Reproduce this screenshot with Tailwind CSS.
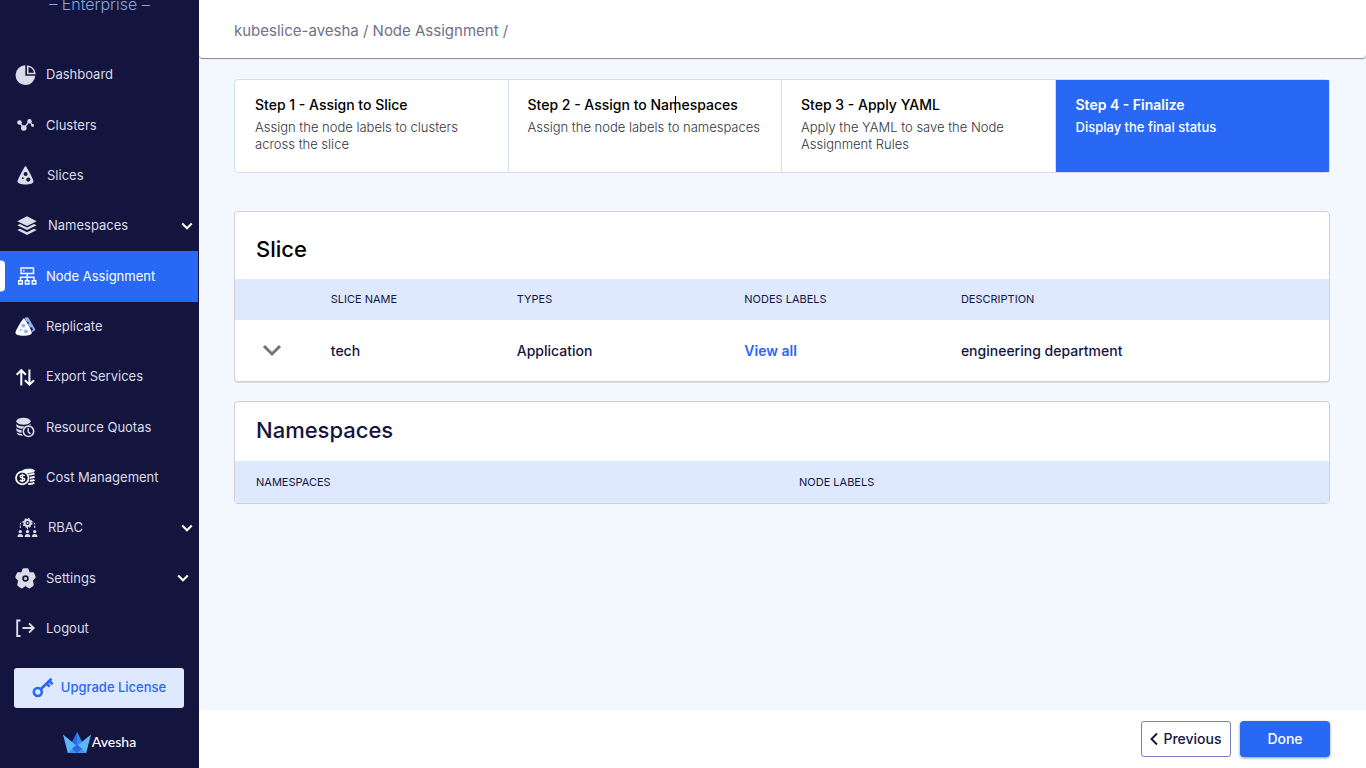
<!DOCTYPE html>
<html lang="en">
<head>
<meta charset="utf-8">
<title>Node Assignment</title>
<script src="https://cdn.jsdelivr.net/npm/@tailwindcss/browser@4"></script>
</head>
<body class="flex h-screen overflow-hidden bg-white font-['Inter','Liberation_Sans',sans-serif] text-[#14153f]">
<aside class="flex w-[199px] shrink-0 flex-col bg-[#13153f] text-[13px] text-[#dcdce8]">
  <div class="h-[50px] shrink-0"><p class="-mt-2 text-center text-base leading-6 font-light text-[#88a5dc]">– Enterprise –</p></div>
  <nav class="flex min-h-0 flex-1 flex-col">
    <a href="#" class="flex flex-1 items-center gap-[10px] pl-[15px]">
      <svg class="size-[21px]" viewBox="0 0 21 21" fill="currentColor"><path d="M10.300 0.300A9.900 9.900 0 1 0 20.300 10.700H10.300z"/><path d="M12.700 1.300a8 8 0 0 1 7.200 7.200h-7.200z" fill="none" stroke="currentColor" stroke-width="1.500"/></svg>
      Dashboard</a>
    <a href="#" class="flex flex-1 items-center gap-[10px] pl-[15px]">
      <svg class="size-[21px]" viewBox="0 0 21 21" fill="currentColor"><path d="M4.500 7.500 9 13l5.500-7 3 4.500" fill="none" stroke="currentColor" stroke-width="1.300"/><circle cx="4.500" cy="7.500" r="2.300"/><circle cx="8.800" cy="13" r="2.800"/><circle cx="14.500" cy="6.200" r="2.200"/><circle cx="17.600" cy="10.500" r="1.400"/></svg>
      Clusters</a>
    <a href="#" class="flex flex-1 items-center gap-[11px] pl-[15px]">
      <svg class="size-[21px]" viewBox="0 0 21 21" fill="currentColor"><path d="M10.500 1c.8 0 8 13.500 8 15.500 0 1.700-3.500 3-8 3s-8-1.300-8-3C2.500 14.500 9.700 1 10.500 1z"/><circle cx="10.600" cy="9" r="2" fill="#13153f"/><circle cx="7.800" cy="13.300" r="1" fill="#13153f"/><circle cx="13.300" cy="14.600" r="2.100" fill="#13153f"/></svg>
      Slices</a>
    <a href="#" class="flex flex-1 items-center gap-[11px] pr-[6px] pl-[17px]">
      <svg class="size-5" viewBox="0 0 20 20" fill="currentColor"><path d="M10 0.300 19.700 5.200 10 10.100 0.300 5.200z"/><path d="M0.300 9.200 3 7.900l7 3.500 7-3.500 2.700 1.300L10 14.100zM0.300 14l2.700-1.300 7 3.500 7-3.500 2.700 1.300L10 18.900z"/></svg>
      <span class="flex-1">Namespaces</span>
      <svg class="h-3 w-3" viewBox="0 0 12 12" fill="none" stroke="#fff" stroke-width="2"><path d="M1.200 3.500 6 8.300l4.800-4.800"/></svg></a>
    <a href="#" aria-current="page" class="relative mr-px flex flex-1 items-center gap-[9px] bg-[#2868f4] pl-[17px] text-white">
      <span class="absolute top-1/2 left-0 h-[31px] w-[5px] -translate-y-1/2 rounded-r bg-white"></span>
      <svg class="size-5" viewBox="0 0 20 20" fill="none" stroke="currentColor" stroke-width="1.400"><path d="M4 2h12.500v5.500H4zM6 4.800h1.500M10.200 7.500v7M3.500 14.500v-3.200H17v3.200M1.700 14.700h3.600v3.300H1.700zM8.400 14.700H12v3.300H8.400zM15.200 14.700h3.600v3.300h-3.600z"/></svg>
      Node Assignment</a>
    <a href="#" class="flex flex-1 items-center gap-[10px] pl-[15px]">
      <svg class="size-[21px]" viewBox="0 0 21 21"><path d="M9.500 2c1.800-1 3.300-.9 4.700.9l5.800 10.100c.5 1-.8 2.300-2.700 3z" fill="#8fb0f5"/><circle cx="15.800" cy="13.200" r="1.900" fill="#13153f"/><circle cx="12.500" cy="7" r="1.300" fill="#13153f"/><path d="M8.800 2.200c.9 0 8 12.300 8 14.500 0 1.800-3.300 3-8.200 3S.4 18.400.4 16.700C.4 14.500 7.900 2.200 8.800 2.200z" fill="#fff"/><circle cx="8.300" cy="9.700" r="1.900" fill="#8fb0f5"/><circle cx="5.600" cy="13.900" r="1" fill="#8fb0f5"/><circle cx="11" cy="15.300" r="1.900" fill="#8fb0f5"/></svg>
      Replicate</a>
    <a href="#" class="flex flex-1 items-center gap-[10px] pl-[15px]">
      <svg class="size-[21px]" viewBox="0 0 21 21" fill="none" stroke="#fff" stroke-width="2"><path d="M6.300 18.500V3.500M1.700 7.800 6.300 3.200l4.600 4.600M14.400 2.500v15M9.900 13.200l4.500 4.500 4.600-4.500"/></svg>
      Export Services</a>
    <a href="#" class="flex flex-1 items-center gap-[10px] pl-[15px]">
      <svg class="size-[21px]" viewBox="0 0 21 21" fill="currentColor"><ellipse cx="8.500" cy="4.200" rx="7.200" ry="3.500"/><path d="M1.300 6.900c2 2.200 5.500 2.700 8.500 2.200l-2.300 2.600c-3.200-.2-6.200-1.300-6.200-3zM1.300 11.300c1.500 1.300 3.500 1.800 5.300 1.800v2.600c-3-.2-5.300-1.200-5.300-2.700zM13 8.200c1.200-.4 2-.9 2.500-1.500v1.500zM1.800 15.500c1.400.9 3.200 1.300 5 1.400l1 1.900c-3.300 0-6-1.300-6-3.300z"/><circle cx="13.500" cy="14.300" r="5.200" fill="none" stroke="currentColor" stroke-width="1.600"/><path d="M13.200 11.300v3.700l2.300 1.900" fill="none" stroke="currentColor" stroke-width="1.500"/></svg>
      Resource Quotas</a>
    <a href="#" class="flex flex-1 items-center gap-[10px] pl-[15px]">
      <svg class="size-[21px]" viewBox="0 0 21 21" fill="none" stroke="#fff"><path d="M6.500 4.500C8.500 1.800 18.500 1.200 19.500 3.800c0 1.600-5 1.700-7.500 1.700z" fill="#fff"/><path d="M13.500 7.300c2 .2 4.500-.1 6-.9M14.800 10.600c2 .2 3.600-.2 4.800-.9M14.800 13.700c1.800.1 3.300-.2 4.700-.9M13.300 17c2.300.1 4.700-.2 6-1.200" stroke-width="2"/><circle cx="7.300" cy="11" r="6.300" stroke-width="1.700"/><path d="M9.700 8.800c-.8-1-4.600-1.200-4.600.7 0 2 4.700 1 4.700 3 0 1.900-4 1.700-4.900.5M7.400 6.800v8.400" stroke-width="1.300"/></svg>
      Cost Management</a>
    <a href="#" class="flex flex-1 items-center gap-[10px] pr-[6px] pl-[17px]">
      <svg class="size-[21px]" viewBox="0 0 21 21" fill="currentColor"><circle cx="10.500" cy="5" r="3" fill="none" stroke="currentColor" stroke-width="2"/><circle cx="10.500" cy="5" r="4.200" fill="none" stroke="currentColor" stroke-width="1.500" stroke-dasharray="1.700 1.600"/><circle cx="10.500" cy="5" r="1"/><path d="M3.300 10V6.300q0-2.300 3-2.300M17.700 10V6.300q0-2.300-3-2.300M10.500 9v3" fill="none" stroke="currentColor" stroke-dasharray="2.500 1"/><circle cx="3.300" cy="13.600" r="1.700"/><circle cx="10.500" cy="13.600" r="1.700"/><circle cx="17.700" cy="13.600" r="1.700"/><path d="M.5 19q0-3 2.800-3t2.800 3zM7.700 19q0-3 2.800-3t2.800 3zM14.900 19q0-3 2.800-3t2.800 3z"/></svg>
      <span class="flex-1">RBAC</span>
      <svg class="h-3 w-3" viewBox="0 0 12 12" fill="none" stroke="#fff" stroke-width="2"><path d="M1.200 3.500 6 8.300l4.800-4.800"/></svg></a>
    <a href="#" class="flex flex-1 items-center gap-[10px] pr-[10px] pl-[15px]">
      <svg class="size-[21px]" viewBox="0 0 21 21" fill="currentColor" stroke="currentColor" stroke-width="3" stroke-linejoin="round"><path d="M8.800 1.800h3.400l1.200 3.600 4.400.3 1.400 3.400-2.900 3.200 1 4.600-2.800 2-4-2.700-4 2.700-2.800-2 1-4.600-2.900-3.200 1.400-3.400 4.400-.3z"/><circle cx="10.500" cy="10.500" r="2.400" stroke="#13153f" stroke-width="1.700"/></svg>
      <span class="flex-1">Settings</span>
      <svg class="h-3 w-3" viewBox="0 0 12 12" fill="none" stroke="#fff" stroke-width="2"><path d="M1.200 3.500 6 8.300l4.800-4.800"/></svg></a>
    <a href="#" class="flex flex-1 items-center gap-[10px] pl-[15px]">
      <svg class="size-[21px]" viewBox="0 0 21 21" fill="none" stroke="currentColor" stroke-width="1.900"><path d="M5.500 2.500H2.200v15.500h3.300M7.500 10h11M14 5.300l4.700 4.700-4.700 4.700"/></svg>
      Logout</a>
  </nav>
  <div class="flex h-[114px] shrink-0 flex-col items-center pt-[14px]">
    <button class="mr-px flex h-10 w-[170px] items-center justify-center gap-[7px] rounded-[3px] bg-[#dee8ff] text-[13px] font-medium text-[#2868f4]">
      <svg class="size-[22px]" viewBox="0 0 22 22" fill="none" stroke="currentColor" stroke-width="2.600"><circle cx="5.800" cy="15" r="4"/><path d="M8.700 12.200 19.500 1.800M14.500 6.500l3.200 3.200M17.200 4l3.400 3.200"/></svg>
      Upgrade License</button>
    <div class="mt-[23px] flex items-center gap-px font-['Lato',sans-serif] text-sm leading-[22px] font-medium text-white">
      <svg class="h-[21px] w-7" viewBox="0 0 28 21"><path d="M14 0 8 12l6 9 6-9z" fill="#2b6be8"/><path d="M14 0v21l6-9z" fill="#2f8df0"/><path d="M0 2.500 4.800 21h4.700L14 14z" fill="#5cb8f8"/><path d="M28 2.500 23.200 21h-4.700L14 14z" fill="#5cb8f8"/><path d="M4.800 21 14 12.500 23.200 21z" fill="#3d92ee"/><path d="M9 16.800 14 21l5-4.200-5-4.300z" fill="#2a69df"/></svg>
      Avesha</div>
  </div>
</aside>
<main class="flex min-w-0 flex-1 flex-col bg-[#f3f7fe]">
  <header class="z-10 flex h-[58px] shrink-0 items-center rounded-b-[4px] bg-white px-[35px] pt-1 text-[15px] text-[#6f7189] shadow-[0_1px_1px_rgba(0,0,0,0.45)]">
    <nav aria-label="Breadcrumb"><a href="#">kubeslice-avesha</a> / <a href="#">Node Assignment</a> /</nav>
  </header>
  <div class="min-h-0 flex-1 px-9 pt-[21px] pl-[35px]">
    <ol class="grid h-[94px] grid-cols-4 rounded-[4px] border border-[#d8def0] bg-white text-[13px] leading-[17px] font-light text-[#33343f]">
      <li class="border-r border-[#d8def0] pt-4 pr-10 pl-5"><h2 class="mb-[5px] text-sm leading-[18px] font-medium text-black">Step 1 - Assign to Slice</h2>Assign the node labels to clusters across the slice</li>
      <li class="border-r border-[#d8def0] px-[19px] pt-4"><h2 class="relative mb-[5px] text-sm leading-[18px] font-medium text-black">Step 2 - Assign to Namespaces<span class="absolute top-0 left-[147px] h-[17px] w-px bg-black"></span></h2>Assign the node labels to namespaces</li>
      <li class="border-r border-[#d8def0] pt-4 pr-10 pl-[19px]"><h2 class="mb-[5px] text-sm leading-[18px] font-medium text-black">Step 3 - Apply YAML</h2>Apply the YAML to save the Node Assignment Rules</li>
      <li aria-current="step" class="bg-[#2868f4] pt-4 pl-5 font-medium text-white"><h2 class="mb-[5px] text-sm leading-[18px] font-semibold">Step 4 - Finalize</h2>Display the final status</li>
    </ol>
    <section class="mt-[38px] rounded-[4px] border border-[#d0d1d6] bg-white shadow-[0_1px_0_#dcdde2]">
      <h2 class="px-[21px] pt-[23px] pb-4 text-[22px] leading-7 font-medium text-black">Slice</h2>
      <table class="w-full table-fixed text-left">
        <colgroup><col class="w-[7.2%]"><col class="w-[17%]"><col class="w-[20.8%]"><col class="w-[19.8%]"><col></colgroup>
        <thead class="bg-[#dee8ff] text-[11px]"><tr class="h-[41px]"><td></td><th class="pl-[17px] font-normal">SLICE NAME</th><th class="pl-[17px] font-normal">TYPES</th><th class="pl-[17px] font-normal">NODES LABELS</th><th class="pl-[17px] font-normal">DESCRIPTION</th></tr></thead>
        <tbody class="text-sm"><tr class="h-[61px]"><td class="pl-[27px]"><button aria-label="Expand tech" class="block"><svg class="size-5" viewBox="0 0 20 20" fill="none" stroke="#757575" stroke-width="3"><path d="M2 5l8 8 8-8"/></svg></button></td><td class="pl-[17px] font-medium">tech</td><td class="pl-[17px] font-medium">Application</td><td class="pl-[17px]"><a href="#" class="font-semibold text-[#2868f4]">View all</a></td><td class="pl-[17px] font-medium">engineering department</td></tr></tbody>
      </table>
    </section>
    <section class="mt-[19px] rounded-[4px] border border-[#d0d1d6] bg-white">
      <h2 class="px-[21px] pt-[14px] pb-[17px] text-[22px] leading-7 font-medium">Namespaces</h2>
      <table class="w-full table-fixed text-left">
        <thead class="bg-[#dee8ff] text-[11px]"><tr class="h-[42px]"><th class="pl-[21px] font-normal">NAMESPACES</th><th class="pl-[17px] font-normal">NODE LABELS</th></tr></thead>
      </table>
    </section>
  </div>
  <footer class="flex h-[58px] shrink-0 items-center justify-end gap-[9px] bg-white pr-9 text-sm font-medium">
    <button class="flex h-9 w-[90px] items-center justify-center gap-[5px] rounded-[3px] border border-[#7a7ec6]"><svg class="h-3.5 w-2" viewBox="0 0 8 14" fill="none" stroke="currentColor" stroke-width="1.900"><path d="M7 1.500 1.500 7 7 12.500"/></svg>Previous</button>
    <button class="h-9 w-[90px] rounded-[4px] bg-[#2868f4] text-white shadow-[0_1px_3px_rgba(0,0,0,0.45)]">Done</button>
  </footer>
</main>
</body>
</html>
